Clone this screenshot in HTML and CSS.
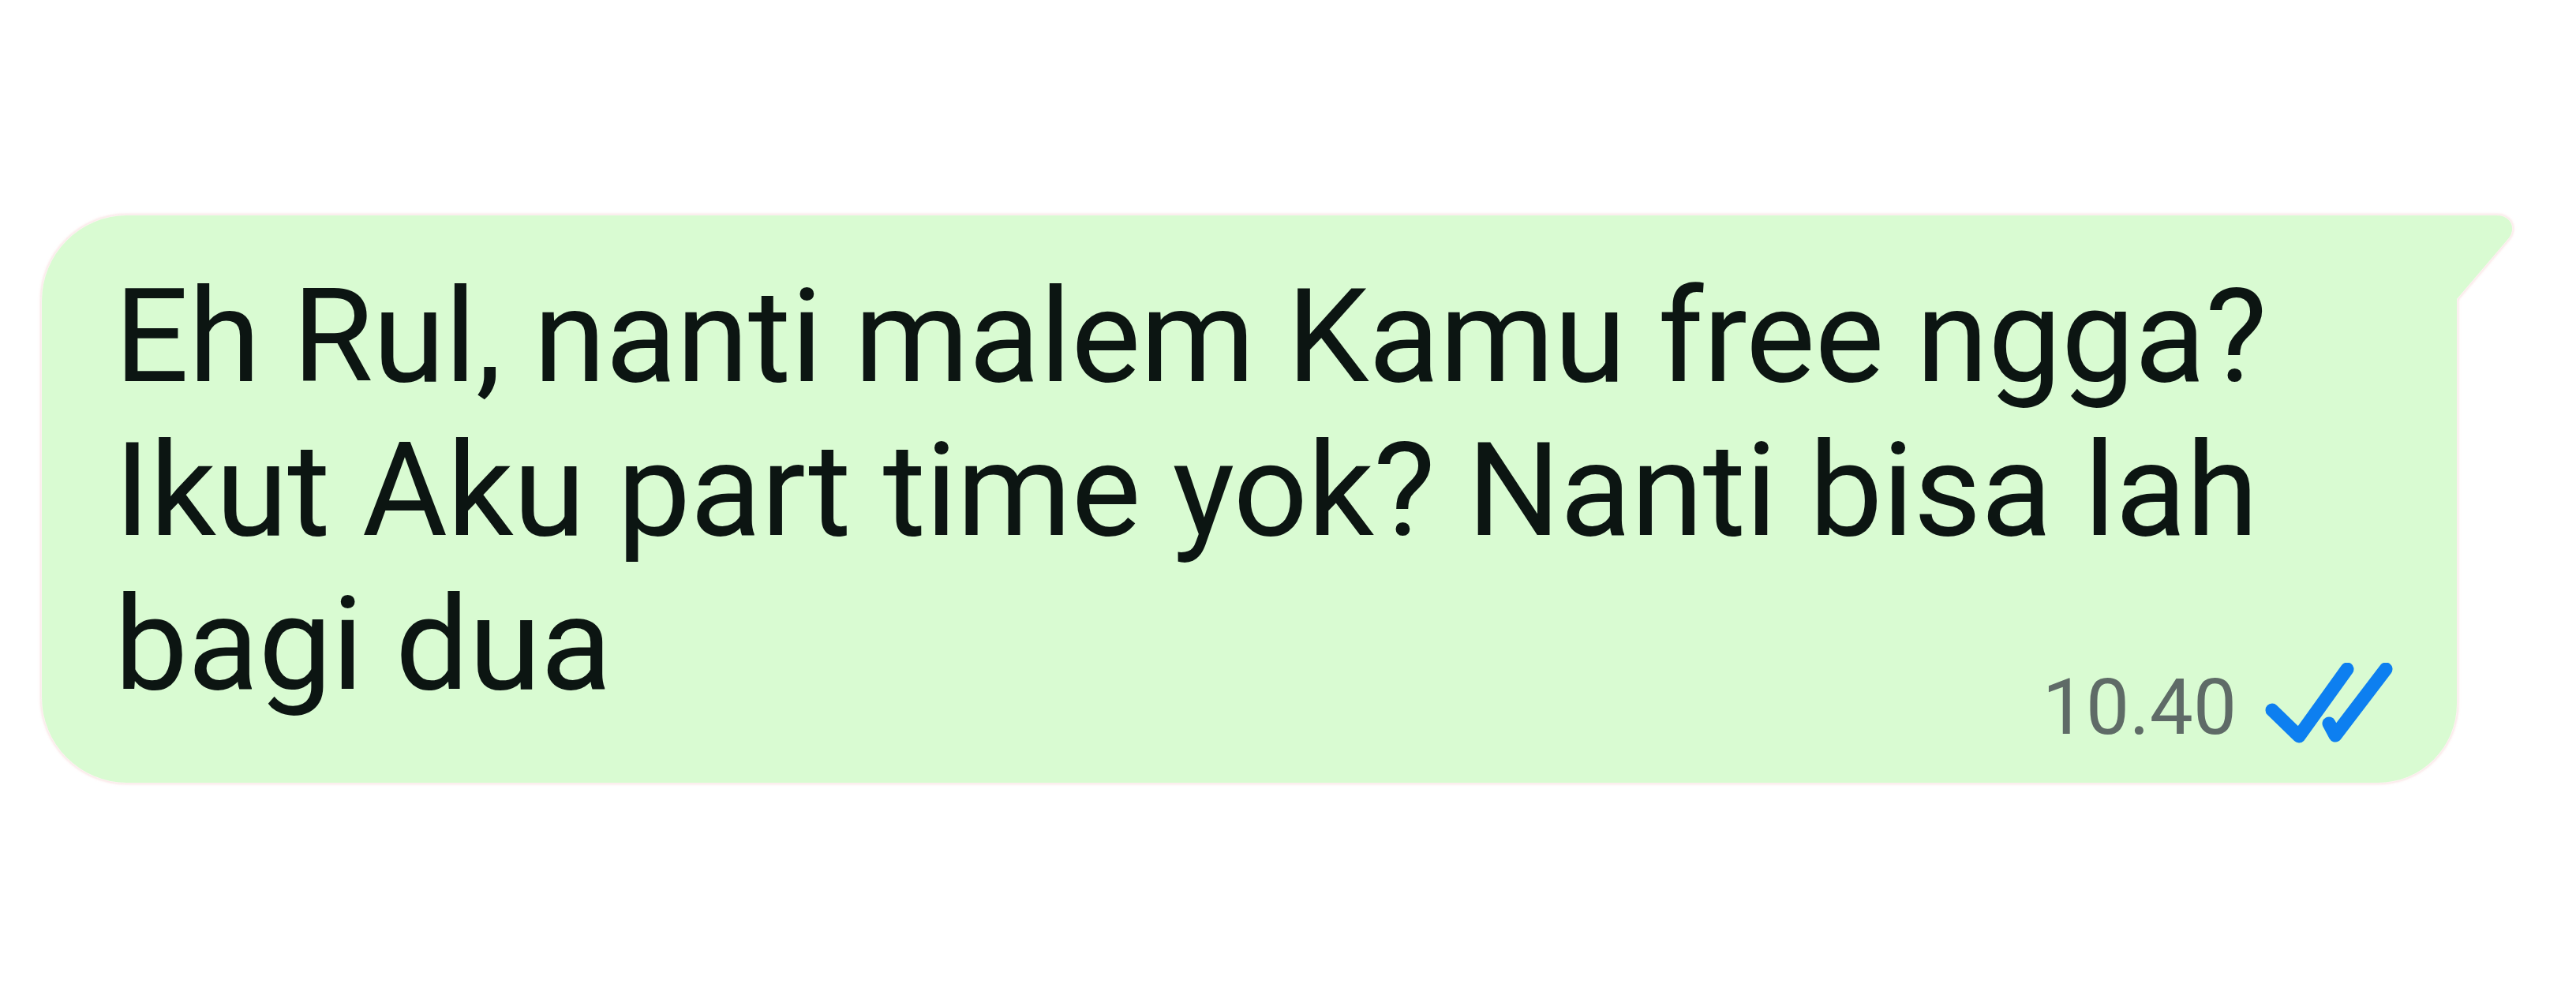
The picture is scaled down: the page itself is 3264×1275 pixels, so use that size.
FILE: index.html
```html
<!DOCTYPE html>
<html lang="id">
<head>
<meta charset="utf-8">
<title>Chat bubble</title>
<link rel="stylesheet" href="styles.css">
</head>
<body>
<div class="stage">
  <div class="bubble-wrap">
    <div class="bubble">
      <p class="text">Eh Rul, nanti malem Kamu free ngga?<br>Ikut Aku part time yok? Nanti bisa lah<br>bagi dua</p>
      <div class="meta">
        <span class="time">10.40</span>
        <svg class="ticks" viewBox="0 0 170 102" width="170" height="102" aria-hidden="true">
          <path d="M12 60 L46 93 L107 8" fill="none" stroke="#0d7ff0" stroke-width="17" stroke-linecap="round" stroke-linejoin="round"/>
          <path d="M84 77 L92 92 L156 8" fill="none" stroke="#0d7ff0" stroke-width="17" stroke-linecap="round" stroke-linejoin="round"/>
        </svg>
      </div>
    </div>
    <svg class="tail" viewBox="0 0 72 108" width="72" height="108" aria-hidden="true">
      <path d="M-2 0 H50 C70 0 76 18 64 31 L0 106 H-2 Z" fill="#d9fbd2"/>
    </svg>
  </div>
</div>
</body>
</html>
```

FILE: styles.css
```css
html, body {
  margin: 0;
  padding: 0;
  background: #ffffff;
}

body {
  width: 3264px;
  height: 1275px;
  overflow: hidden;
  font-family: Roboto, "Noto Sans", sans-serif;
}

.stage {
  padding: 273px 0 0 53px;
}

.bubble-wrap {
  position: relative;
  width: 3060px;
  filter: drop-shadow(0 0 1px #ffffff) drop-shadow(0 0 1px #ffffff) drop-shadow(0 0 1.5px rgba(236, 160, 160, 0.7));
}

.bubble {
  background: #d9fbd2;
  border-radius: 108px 0 100px 108px;
  padding: 56px 76px 38px 92px;
}

.text {
  margin: 0;
  font-size: 166px;
  line-height: 195px;
  letter-spacing: -0.5px;
  color: #0c1512;
  white-space: nowrap;
}

.meta {
  display: flex;
  justify-content: flex-end;
  align-items: flex-start;
  gap: 33px;
  margin-top: -75px;
}

.time {
  font-size: 98px;
  line-height: 115px;
  color: #5f6b67;
}

.ticks {
  display: block;
  margin-top: 1px;
}

.tail {
  position: absolute;
  left: 100%;
  top: 0;
  display: block;
}
```
